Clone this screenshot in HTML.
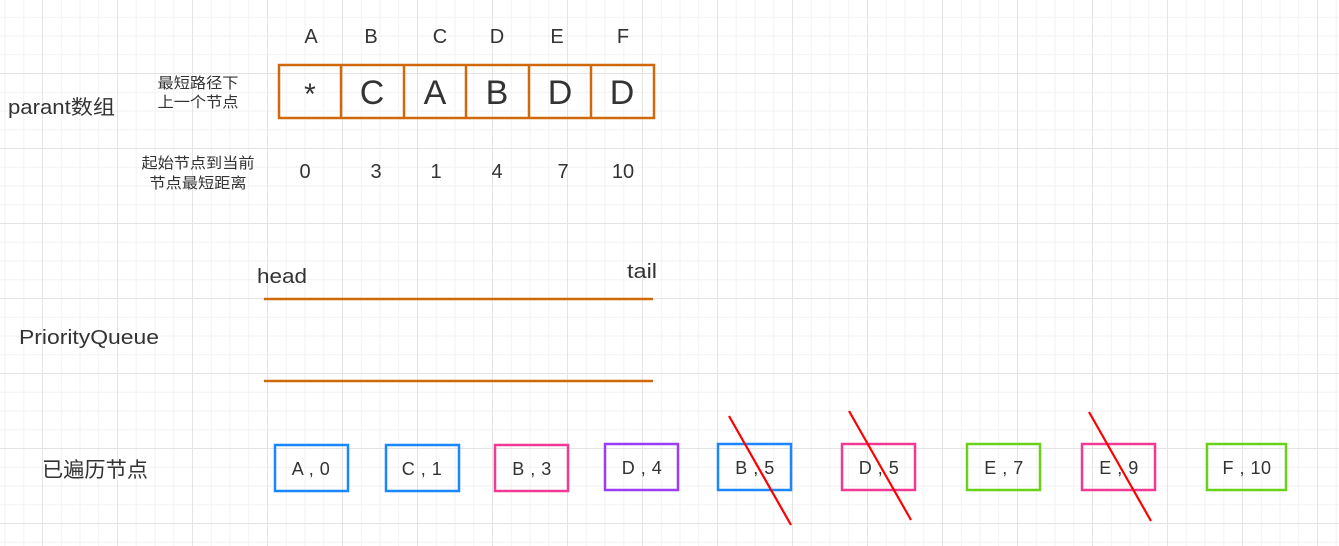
<!DOCTYPE html>
<html><head><meta charset="utf-8"><style>
html,body{margin:0;padding:0;}
body{width:1339px;height:546px;overflow:hidden;background-color:#fff;
background-image:
linear-gradient(to right,#e4e4e4 1px,transparent 1px),
linear-gradient(to bottom,#e4e4e4 1px,transparent 1px),
linear-gradient(to right,#f2f2f2 1px,transparent 1px),
linear-gradient(to bottom,#f2f2f2 1px,transparent 1px);
background-size:75px 75px,75px 75px,18.75px 18.75px,18.75px 18.75px;
background-position:42px -2px,42px -2px,42px -2px,42px -2px;
font-family:"Liberation Sans","Noto Sans CJK SC",sans-serif;}
svg text{font-family:"Liberation Sans","Noto Sans CJK SC",sans-serif;fill:#333;}
</style></head><body>
<svg width="1339" height="546" style="position:absolute;left:0;top:0">
<g font-size="20" text-anchor="middle">
<text x="311" y="43">A</text><text x="371" y="43">B</text><text x="440" y="43">C</text>
<text x="497" y="43">D</text><text x="557" y="43">E</text><text x="623" y="43">F</text>
<text x="305" y="178">0</text><text x="376" y="178">3</text><text x="436" y="178">1</text>
<text x="497" y="178">4</text><text x="563" y="178">7</text><text x="623" y="178">10</text>
</g>
<g fill="none" stroke="#d0690c" stroke-width="2.5">
<rect x="279" y="65" width="375" height="53"/>
<line x1="341" y1="65" x2="341" y2="118"/><line x1="404" y1="65" x2="404" y2="118"/>
<line x1="466" y1="65" x2="466" y2="118"/><line x1="529" y1="65" x2="529" y2="118"/>
<line x1="591" y1="65" x2="591" y2="118"/>
<line x1="264" y1="299" x2="653" y2="299"/><line x1="264" y1="381" x2="653" y2="381"/>
</g>
<g font-size="34" text-anchor="middle">
<text x="310" y="104" font-size="30">*</text><text x="372" y="104">C</text><text x="435" y="104">A</text>
<text x="497" y="104">B</text><text x="560" y="104">D</text><text x="622" y="104">D</text>
</g>
<text x="8" y="114" font-size="20" textLength="107" lengthAdjust="spacingAndGlyphs">parant数组</text>
<g font-size="15" text-anchor="middle">
<text x="198" y="88" textLength="81" lengthAdjust="spacingAndGlyphs">最短路径下</text>
<text x="198" y="107" textLength="81" lengthAdjust="spacingAndGlyphs">上一个节点</text>
<text x="198" y="168" textLength="113" lengthAdjust="spacingAndGlyphs">起始节点到当前</text>
<text x="198" y="188" textLength="97" lengthAdjust="spacingAndGlyphs">节点最短距离</text>
</g>
<text x="257" y="283" font-size="20" textLength="50" lengthAdjust="spacingAndGlyphs">head</text>
<text x="627" y="278" font-size="20" textLength="30" lengthAdjust="spacingAndGlyphs">tail</text>
<text x="19" y="344" font-size="20" textLength="140" lengthAdjust="spacingAndGlyphs">PriorityQueue</text>
<text x="42" y="477" font-size="21" textLength="106" lengthAdjust="spacingAndGlyphs">已遍历节点</text>
<g fill="none" stroke-width="2.5">
<rect x="275" y="445" width="73" height="46" stroke="#1a86ff"/>
<rect x="386" y="445" width="73" height="46" stroke="#1a86ff"/>
<rect x="495" y="445" width="73" height="46" stroke="#f03a95"/>
<rect x="605" y="444" width="73" height="46" stroke="#9c3cf5"/>
<rect x="718" y="444" width="73" height="46" stroke="#1a86ff"/>
<rect x="842" y="444" width="73" height="46" stroke="#f03a95"/>
<rect x="967" y="444" width="73" height="46" stroke="#6ad11a"/>
<rect x="1082" y="444" width="73" height="46" stroke="#f03a95"/>
<rect x="1207" y="444" width="79" height="46" stroke="#6ad11a"/>
</g>
<g font-size="18" text-anchor="middle" letter-spacing="0.5">
<text x="311" y="475">A , 0</text><text x="422" y="475">C , 1</text><text x="532" y="475">B , 3</text>
<text x="642" y="474">D , 4</text><text x="755" y="474">B , 5</text><text x="879" y="474">D , 5</text>
<text x="1004" y="474">E , 7</text><text x="1119" y="474">E , 9</text><text x="1247" y="474">F , 10</text>
</g>
<g stroke="#f00" stroke-width="2.2">
<line x1="729" y1="416" x2="791" y2="525"/>
<line x1="849" y1="411" x2="911" y2="520"/>
<line x1="1089" y1="412" x2="1151" y2="521"/>
</g>
</svg>
</body></html>
